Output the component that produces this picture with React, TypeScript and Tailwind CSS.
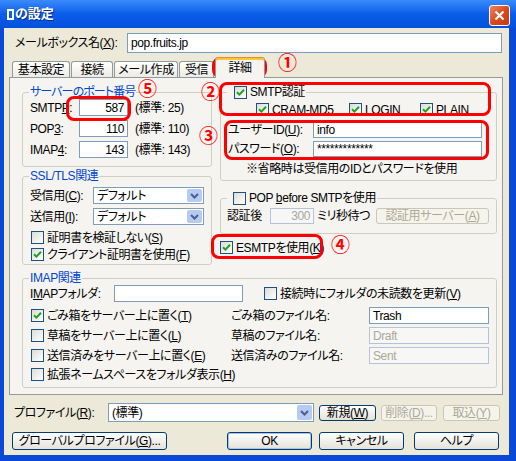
import type { ReactNode } from "react";
import clsx from "clsx";

function Check({ checked = false, className }: { checked?: boolean; className?: string }) {
  return (
    <span
      className={clsx(
        "inline-flex h-[13px] w-[13px] shrink-0 items-center justify-center border border-[#1C5180] bg-gradient-to-br from-[#DCDCD7] to-white",
        className
      )}
    >
      {checked && (
        <svg viewBox="0 0 9 9" className="h-[9px] w-[9px]">
          <path d="M1 4.2 L3.4 6.6 L8 1.8" stroke="#21A121" strokeWidth="2" fill="none" />
        </svg>
      )}
    </span>
  );
}

function CheckLabel({ checked, children, className }: { checked?: boolean; children: ReactNode; className?: string }) {
  return (
    <div className={clsx("flex h-[13px] items-center", className)}>
      <Check checked={checked} />
      <span className="ml-[3px] whitespace-nowrap">{children}</span>
    </div>
  );
}

function TextBox({
  value,
  className,
  right,
  disabled,
}: {
  value?: string;
  className?: string;
  right?: boolean;
  disabled?: boolean;
}) {
  return (
    <div
      className={clsx(
        "flex shrink-0 items-center border px-[3px] whitespace-nowrap",
        disabled ? "border-[#B3C3D9] bg-[#F7F7F5] text-[#ACA899]" : "border-[#7F9DB9] bg-white",
        right && "justify-end",
        className
      )}
    >
      {value}
    </div>
  );
}

function Select({ value, className }: { value: string; className?: string }) {
  return (
    <div className={clsx("flex shrink-0 items-stretch border border-[#7F9DB9] bg-white", className)}>
      <span className="flex flex-1 items-center pl-[3px]">{value}</span>
      <span className="m-[1px] flex w-[15px] items-center justify-center rounded-[2px] bg-[#B7CAF6]">
        <svg viewBox="0 0 9 6" className="h-[6px] w-[9px]">
          <path d="M1 1 L4.5 4.5 L8 1" stroke="#4D6185" strokeWidth="2" fill="none" />
        </svg>
      </span>
    </div>
  );
}

function Btn({
  children,
  className,
  disabled,
  primary,
}: {
  children: ReactNode;
  className?: string;
  disabled?: boolean;
  primary?: boolean;
}) {
  return (
    <div
      className={clsx(
        "flex shrink-0 items-center justify-center rounded-[3px] border whitespace-nowrap",
        disabled
          ? "border-[#C9C7BA] bg-[#F5F4EA] text-[#ACA899]"
          : "border-[#003C74] bg-gradient-to-b from-white to-[#E3E2DA] text-black",
        primary && "shadow-[inset_0_0_0_1px_#A9C2EE]",
        className
      )}
    >
      {children}
    </div>
  );
}

function Group({
  legend,
  className,
  children,
}: {
  legend: ReactNode;
  className?: string;
  children: ReactNode;
}) {
  return (
    <div className={clsx("relative shrink-0 rounded-[3px] border border-[#D0D0BF]", className)}>
      <div className="absolute -top-[8px] left-[6px] flex h-[14px] items-center bg-[#F5F4F0] px-[1px]">{legend}</div>
      {children}
    </div>
  );
}

function Tab({ children, w, active }: { children: ReactNode; w: string; active?: boolean }) {
  return (
    <div
      className={clsx(
        "flex shrink-0 items-center justify-center rounded-t-[3px] border border-[#919B9C] whitespace-nowrap",
        w,
        active
          ? "relative z-10 -mb-[1px] h-[21px] border-b-0 border-t-[#E68B2C] bg-[#F5F4F0] shadow-[inset_0_2px_0_#FFC73C]"
          : "h-[16px] border-b-0 bg-gradient-to-b from-white to-[#ECEBE6]"
      )}
    >
      {children}
    </div>
  );
}

function Red({ className }: { className: string }) {
  return <div className={clsx("pointer-events-none absolute rounded-[8px] border-[3px] border-[#FF0000]", className)} />;
}

function Num({ children, className }: { children: ReactNode; className: string }) {
  return (
    <div className={clsx("absolute text-[19px] leading-none font-bold tracking-normal text-[#FF0000]", className)}>
      {children}
    </div>
  );
}

export default function App() {
  return (
    <div className="relative flex h-[461px] w-[516px] flex-col bg-[#0A48D8] text-[12px] leading-[14px] tracking-[-0.4px] text-black [font-family:'Liberation_Sans','Noto_Sans_CJK_JP',sans-serif] [font-feature-settings:'palt']">
      {/* title bar */}
      <div className="flex h-[28px] shrink-0 items-center bg-gradient-to-b from-[#3A8BFA] via-[#0A5DEA] to-[#0550DC] pl-[7px] pr-[6px]">
        <span className="mr-[1px] inline-block h-[11px] w-[7px] border-2 border-white" />
        <span className="text-[13px] font-bold tracking-normal text-white [text-shadow:1px_1px_0_#0A2A80]">の設定</span>
        <div className="ml-auto mt-[3px] flex h-[21px] w-[21px] items-center justify-center rounded-[3px] border border-white bg-gradient-to-br from-[#E9855E] via-[#DB4A1C] to-[#C23A10]">
          <svg viewBox="0 0 11 11" className="h-[11px] w-[11px]">
            <path d="M1.5 1.5 L9.5 9.5 M9.5 1.5 L1.5 9.5" stroke="white" strokeWidth="2.2" />
          </svg>
        </div>
      </div>

      {/* body */}
      <div className="mb-[6px] ml-[4px] mr-[7px] flex flex-1 flex-col bg-[#ECE9D8]">
        <div className="mt-[5px] flex h-[20px] items-center">
          <span className="ml-[11px] w-[112px]">
            メールボックス名(<u>X</u>):
          </span>
          <TextBox value="pop.fruits.jp" className="h-[20px] w-[375px]" />
        </div>

        <div className="mt-[5px] ml-[8px] flex h-[19px] items-end gap-[1px]">
          <Tab w="w-[58px]">基本設定</Tab>
          <Tab w="w-[42px]">接続</Tab>
          <Tab w="w-[64px]">メール作成</Tab>
          <Tab w="w-[35px]">受信</Tab>
          <Tab w="w-[50px]" active>
            詳細
          </Tab>
        </div>

        {/* panel */}
        <div className="ml-[5px] h-[318px] w-[494px] shrink-0 border border-[#919B9C] bg-[#F5F4F0]">
          <div className="flex pl-[12px]">
            {/* left column */}
            <div className="flex w-[190px] flex-col">
              <Group
                legend={<span className="tracking-[-0.9px] text-[#0046D5]">サーバーのポート番号</span>}
                className="mt-[14px] h-[75px]"
              >
                <div className="flex flex-col gap-[4px] pt-[6px]">
                  {[
                    ["SMTP", "P", "587", "25"],
                    ["POP", "3", "110", "110"],
                    ["IMAP", "4", "143", "143"],
                  ].map(([a, u, v, d]) => (
                    <div key={a} className="flex h-[17px] items-center">
                      <span className="ml-[7px] w-[49px]">
                        {a}
                        <u>{u}</u>:
                      </span>
                      <TextBox value={v} right className="h-[17px] w-[49px]" />
                      <span className="ml-[7px] whitespace-nowrap">(標準: {d})</span>
                    </div>
                  ))}
                </div>
              </Group>

              <Group legend={<span className="text-[#0046D5]">SSL/TLS関連</span>} className="mt-[9px] h-[89px]">
                <div className="flex flex-col pt-[10px]">
                  <div className="flex h-[17px] items-center">
                    <span className="ml-[7px] w-[63px]">
                      受信用(<u>C</u>):
                    </span>
                    <Select value="デフォルト" className="h-[17px] w-[111px]" />
                  </div>
                  <div className="mt-[4px] flex h-[17px] items-center">
                    <span className="ml-[7px] w-[63px]">
                      送信用(<u>I</u>):
                    </span>
                    <Select value="デフォルト" className="h-[17px] w-[111px]" />
                  </div>
                  <CheckLabel className="mt-[6px] ml-[8px]">
                    証明書を検証しない(<u>S</u>)
                  </CheckLabel>
                  <CheckLabel checked className="mt-[4px] ml-[8px]">
                    クライアント証明書を使用(<u>F</u>)
                  </CheckLabel>
                </div>
              </Group>
            </div>

            {/* right column */}
            <div className="ml-[8px] flex w-[277px] flex-col">
              <Group
                legend={
                  <div className="ml-[6px] flex items-center">
                    <Check checked />
                    <span className="ml-[3px]">SMTP認証</span>
                  </div>
                }
                className="mt-[14px] h-[89px]"
              >
                <div className="flex flex-col pt-[10px]">
                  <div className="flex h-[13px] items-center pl-[35px]">
                    <CheckLabel checked className="w-[93px]">
                      CRAM-MD5
                    </CheckLabel>
                    <CheckLabel checked className="w-[71px]">
                      LOGIN
                    </CheckLabel>
                    <CheckLabel checked>PLAIN</CheckLabel>
                  </div>
                  <div className="mt-[6px] flex h-[16px] items-center">
                    <span className="ml-[7px] w-[85px]">
                      ユーザーID(<u>U</u>):
                    </span>
                    <TextBox value="info" className="h-[16px] w-[169px]" />
                  </div>
                  <div className="mt-[3px] flex h-[16px] items-center">
                    <span className="ml-[7px] w-[85px]">
                      パスワード(<u>O</u>):
                    </span>
                    <TextBox value="*************" className="h-[16px] w-[169px]" />
                  </div>
                  <div className="mt-[5px] ml-[25px] whitespace-nowrap">※省略時は受信用のIDとパスワードを使用</div>
                </div>
              </Group>

              <Group
                legend={
                  <div className="ml-[5px] flex items-center">
                    <Check />
                    <span className="ml-[3px]">
                      POP <u>b</u>efore SMTPを使用
                    </span>
                  </div>
                }
                className="mt-[17px] h-[36px]"
              >
                <div className="mt-[9px] flex h-[16px] items-center">
                  <span className="ml-[6px] w-[43px]">認証後</span>
                  <TextBox value="300" right disabled className="h-[16px] w-[44px]" />
                  <span className="ml-[3px] whitespace-nowrap">ミリ秒待つ</span>
                  <Btn disabled className="mr-[7px] ml-auto h-[16px] w-[113px]">
                    認証用サーバー(<u>A</u>)
                  </Btn>
                </div>
              </Group>

              <CheckLabel checked className="mt-[7px]">
                ESMTPを使用(<u>K</u>)
              </CheckLabel>
            </div>
          </div>

          {/* IMAP group */}
          <Group legend={<span className="text-[#0046D5]">IMAP関連</span>} className="mt-[13px] ml-[12px] h-[110px] w-[475px]">
            <div className="flex flex-col pt-[6px]">
              <div className="flex h-[17px] items-center">
                <span className="ml-[7px] w-[84px]">
                  I<u>M</u>APフォルダ:
                </span>
                <TextBox className="h-[17px] w-[129px]" />
                <CheckLabel className="ml-[21px]">
                  接続時にフォルダの未読数を更新(<u>V</u>)
                </CheckLabel>
              </div>
              {[
                ["ごみ箱をサーバー上に置く", "T", "ごみ箱のファイル名:", "Trash", true, "mt-[5px]"],
                ["草稿をサーバー上に置く", "L", "草稿のファイル名:", "Draft", false, "mt-[3px]"],
                ["送信済みをサーバー上に置く", "E", "送信済みのファイル名:", "Sent", false, "mt-[3px]"],
              ].map(([label, key, fileLabel, file, on, mt]) => (
                <div key={key as string} className={clsx("flex h-[17px] items-center", mt as string)}>
                  <div className="w-[208px] pl-[8px]">
                    <CheckLabel checked={on as boolean}>
                      {label}(<u>{key}</u>)
                    </CheckLabel>
                  </div>
                  <span className="w-[138px] whitespace-nowrap">{fileLabel}</span>
                  <TextBox value={file as string} disabled={!on} className="h-[17px] w-[120px]" />
                </div>
              ))}
              <CheckLabel className="mt-[4px] ml-[8px]">
                拡張ネームスペースをフォルダ表示(<u>H</u>)
              </CheckLabel>
            </div>
          </Group>
        </div>

        {/* profile row */}
        <div className="mt-[8px] flex h-[19px] items-center">
          <span className="ml-[10px] w-[94px]">
            プロファイル(<u>R</u>):
          </span>
          <Select value="(標準)" className="h-[19px] w-[206px]" />
          <Btn className="ml-[5px] h-[16px] w-[57px]">
            新規(<u>W</u>)
          </Btn>
          <Btn disabled className="ml-[5px] h-[16px] w-[56px]">
            削除(<u>D</u>)...
          </Btn>
          <Btn disabled className="ml-[6px] h-[16px] w-[57px]">
            取込(<u>Y</u>)
          </Btn>
        </div>

        {/* buttons */}
        <div className="mt-[10px] flex h-[18px] items-center">
          <Btn className="ml-[8px] h-[18px] w-[155px]">
            グローバルプロファイル(<u>G</u>)...
          </Btn>
          <Btn primary className="ml-[60px] h-[18px] w-[85px]">
            OK
          </Btn>
          <Btn className="ml-[7px] h-[18px] w-[85px]">キャンセル</Btn>
          <Btn className="ml-[10px] h-[18px] w-[85px]">ヘルプ</Btn>
        </div>
      </div>

      {/* annotations */}
      <Red className="left-[212px] top-[57px] h-[21px] w-[55px]" />
      <Red className="left-[219px] top-[82px] h-[34px] w-[272px]" />
      <Red className="left-[224px] top-[120px] h-[40px] w-[265px]" />
      <Red className="left-[211px] top-[234px] h-[25px] w-[112px]" />
      <Red className="left-[66px] top-[96px] h-[25px] w-[65px]" />
      <Num className="left-[278px] top-[54px]">①</Num>
      <Num className="left-[201px] top-[83px]">②</Num>
      <Num className="left-[199px] top-[127px]">③</Num>
      <Num className="left-[331px] top-[236px]">④</Num>
      <Num className="left-[138px] top-[80px]">⑤</Num>
    </div>
  );
}
